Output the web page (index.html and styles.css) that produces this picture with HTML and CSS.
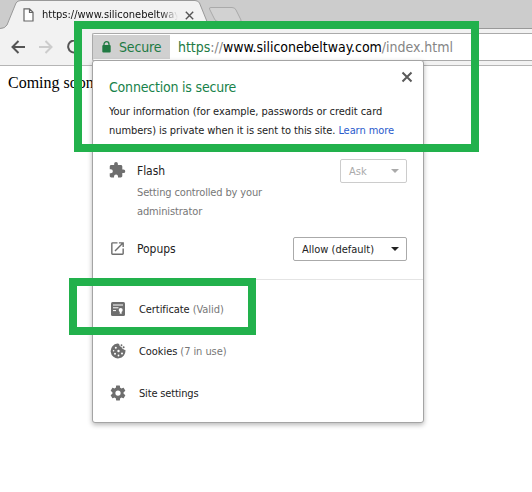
FILE: index.html
```html
<!DOCTYPE html>
<html lang="en">
<head>
<meta charset="utf-8">
<title>Site information</title>
<link rel="stylesheet" href="styles.css">
</head>
<body>
<div class="browser">
  <header class="tabstrip">
    <svg class="tab-shapes" width="532" height="29" viewBox="0 0 532 29">
      <path d="M0 28.5H5M207 28.5H532" stroke="#999" fill="none"/>
      <path d="M0 29V28.5Q5 28.5 7 25L16 3Q17.500 .5 21 .5H195Q198 .5 199.500 3L208 24Q210 28.500 215 28.500V29Z" fill="#f2f2f2"/>
      <path d="M0 28.500Q5 28.500 7 25L16 3Q17.500 .5 21 .5H195Q198 .5 199.500 3L208 24Q210 28.500 215 28.500" fill="none" stroke="#999"/>
      <path d="M211 7.500H232Q235 7.500 236 10L241 20Q242 21.500 239 21.500H218Q215.500 21.500 214.500 19L209.500 9Q209 7.500 211 7.500Z" fill="#d2d2d2" stroke="#aaa"/>
    </svg>
    <div class="tab">
      <svg class="file-icon" width="11" height="14" viewBox="0 0 11 14"><path d="M1 .8H6.500L10 4.300V13H1ZM6.500 1V4.500H10" fill="#fff" stroke="#666" stroke-width="1.200"/></svg>
      <span class="tab-title">https://www.siliconebeltway</span>
      <svg class="tab-close" width="9" height="9" viewBox="0 0 9 9"><path d="M.8.8L8.200 8.200M8.200.8L.8 8.200" stroke="#555" stroke-width="1.400"/></svg>
    </div>
  </header>
  <div class="toolbar">
    <svg class="nav" width="14" height="14" viewBox="0 0 14 14"><path d="M14 7H1.500M7.500 1L1.500 7L7.500 13" fill="none" stroke="#555" stroke-width="2"/></svg>
    <svg class="nav" width="14" height="14" viewBox="0 0 14 14"><path d="M0 7H12.500M6.500 1L12.500 7L6.500 13" fill="none" stroke="#ccc" stroke-width="2"/></svg>
    <svg class="nav" width="14" height="14" viewBox="0 0 14 14"><path d="M12 3A6 6 0 1 0 13 8M13 0V5H8" fill="none" stroke="#555" stroke-width="2"/></svg>
    <div class="omnibox">
      <div class="chip">
        <svg width="9" height="12" viewBox="0 0 9 12"><path d="M2 5V3.200A2.500 2.500 0 0 1 7 3.200V5" fill="none" stroke="#217a43" stroke-width="1.300"/><rect x=".3" y="4" width="8.400" height="7.500" rx="1" fill="#217a43"/></svg>
        <span class="chip-label">Secure</span>
      </div>
      <div class="url"><span class="scheme">https</span><span class="dim">://</span>www.siliconebeltway.com<span class="dim">/index.html</span></div>
    </div>
  </div>
  <main class="page">Coming soon</main>
</div>

<section class="popup">
  <div class="summary">
    <h1>Connection is secure</h1>
    <svg class="popup-close" width="12" height="12" viewBox="0 0 12 12"><path d="M1.500 1.500L10.500 10.500M10.500 1.500L1.500 10.500" stroke="#5a5a5a" stroke-width="2"/></svg>
    <p><span class="l1">Your information (for example, passwords or credit card</span><br><span class="l2">numbers) is private when it is sent to this site. <a>Learn more</a></span></p>
  </div>
  <div class="permissions">
    <div class="perm flash">
      <svg class="icon" width="17" height="17" viewBox="1 1 23 23"><path fill="#6e6e6e" d="M20.500 11H19V7c0-1.100-.9-2-2-2h-4V3.500a2.500 2.500 0 0 0-5 0V5H4c-1.100 0-1.990.9-1.990 2v3.800H3.500a2.700 2.700 0 0 1 0 5.400H2V20c0 1.100.9 2 2 2h3.800v-1.500a2.700 2.700 0 0 1 5.400 0V22H17c1.100 0 2-.9 2-2v-4h1.500a2.500 2.500 0 0 0 0-5z"/></svg>
      <div class="perm-text"><span class="name">Flash</span><div class="note">Setting controlled by your<br>administrator</div></div>
      <div class="select disabled"><span>Ask</span><i class="arrow"></i></div>
    </div>
    <div class="perm">
      <svg class="icon" width="17" height="17" viewBox="0 0 24 24"><path fill="#6e6e6e" d="M19 19H5V5h7V3H5a2 2 0 0 0-2 2v14a2 2 0 0 0 2 2h14c1.100 0 2-.9 2-2v-7h-2v7zM14 3v2h3.590l-9.830 9.830 1.410 1.410L19 6.410V10h2V3h-7z"/></svg>
      <div class="perm-text"><span class="name">Popups</span></div>
      <div class="select"><span>Allow (default)</span><i class="arrow"></i></div>
    </div>
  </div>
  <div class="links">
    <div class="link">
      <svg class="icon" width="16" height="16" viewBox="0 0 16 16"><rect x="1" y="1" width="14" height="14" rx="1.500" fill="#6e6e6e"/><path d="M3 4H13M3 6.800H8.500M3 9.600H6" stroke="#fff" stroke-width="1"/><circle cx="10.700" cy="9" r="2" fill="#fff"/><path d="M9.800 10H11.600V13L10.700 12.400L9.800 13Z" fill="#fff"/></svg>
      <span class="cert">Certificate <em>(Valid)</em></span>
    </div>
    <div class="link">
      <svg class="icon" width="16" height="16" viewBox="0 0 16 16"><path d="M7.500.6Q9.500.4 9.700 3Q10.500 3.800 11.500 3.600Q11.500 6 13.200 6Q14 7 15.400 7A7.400 7.400 0 1 1 7.500.6Z" fill="#6e6e6e"/><circle cx="11.500" cy="2.200" r=".9" fill="#6e6e6e"/><circle cx="13.600" cy="4.300" r="1" fill="#6e6e6e"/><g fill="#fff"><circle cx="5.800" cy="4.700" r="1"/><circle cx="3.600" cy="7.700" r=".8"/><circle cx="8.500" cy="8" r="1.200"/><circle cx="5" cy="10.700" r="1"/><circle cx="8.500" cy="12.500" r=".9"/><circle cx="12" cy="10.500" r="1"/></g></svg>
      <span class="cook">Cookies <em>(7 in use)</em></span>
    </div>
    <div class="link">
      <svg class="icon" width="18" height="18" viewBox="0 0 24 24"><path fill="#6e6e6e" d="M19.430 12.980c.04-.32.07-.64.07-.98s-.03-.66-.07-.98l2.110-1.650c.19-.15.24-.42.12-.64l-2-3.460c-.12-.22-.39-.3-.61-.22l-2.490 1c-.52-.4-1.080-.73-1.690-.98l-.38-2.650A.49.49 0 0 0 14 2h-4c-.25 0-.46.180-.49.420l-.38 2.650c-.61.250-1.170.590-1.690.980l-2.490-1c-.23-.09-.49 0-.61.220l-2 3.460c-.13.220-.07.490.12.640l2.110 1.650c-.04.320-.07.650-.07.980s.03.660.07.980l-2.110 1.650c-.19.150-.24.420-.12.640l2 3.460c.12.220.39.300.61.220l2.490-1c.52.400 1.080.730 1.690.980l.38 2.650c.03.240.24.420.49.420h4c.25 0 .46-.18.49-.42l.38-2.650c.61-.25 1.170-.59 1.690-.98l2.490 1c.23.090.49 0 .61-.22l2-3.460c.12-.22.070-.49-.12-.64l-2.110-1.650zM12 15.500a3.500 3.500 0 1 1 0-7 3.500 3.500 0 0 1 0 7z"/></svg>
      <span class="sett">Site settings</span>
    </div>
  </div>
</section>
<div class="mark mark-secure"></div>
<div class="mark mark-cert"></div>
</body>
</html>
```
FILE: styles.css
```css
* { box-sizing: border-box; }
body { margin: 0; width: 532px; height: 492px; overflow: hidden; background: #fff; font-family: "DejaVu Sans Condensed", "DejaVu Sans", sans-serif; font-stretch: condensed; font-size: 11px; color: #222; }
svg { display: block; flex: none; }
span { white-space: nowrap; }

.tabstrip { position: relative; height: 29px; background: #ccc; }
.tab-shapes { position: absolute; left: 0; top: 0; }
.tab { position: relative; display: flex; align-items: center; height: 29px; padding-left: 23px; }
.file-icon { margin-top: 1px; }
.tab-title { flex: none; width: 142px; margin-left: 8px; line-height: 20px; color: #111; -webkit-mask-image: linear-gradient(90deg, #000 118px, transparent 136px); mask-image: linear-gradient(90deg, #000 118px, transparent 136px); }
.tab-close { margin-left: 1px; margin-top: 2px; }

.toolbar { display: flex; align-items: center; height: 37px; background: #f2f2f2; border-bottom: 1px solid #b5b5b5; padding-left: 11px; }
.nav { margin-right: 14px; }
.omnibox { display: flex; align-items: center; flex: 1; height: 28px; margin-left: -3px; background: #fff; border: 1px solid #aaa; border-right: 0; border-radius: 2px 0 0 2px; }
.chip { display: flex; align-items: center; width: 77px; height: 24px; padding-left: 9px; background: #d0d0d0; color: #217a43; font-size: 14px; letter-spacing: -.15px; }
.chip-label { margin-left: 8px; }
.url { margin-left: 8px; font-size: 14px; letter-spacing: -.03px; color: #000; white-space: nowrap; }
.scheme { color: #217a43; }
.dim { color: #858585; }
.page { padding: 8px; font: 16px/18px "Liberation Serif", serif; color: #000; }

.popup { position: absolute; left: 92px; top: 60px; width: 332px; height: 363px; background: #fff; border: 1px solid #a4a4a4; border-radius: 3px; box-shadow: 0 2px 5px rgba(0,0,0,.28); }
.summary { display: grid; grid-template-columns: 1fr 12px; grid-template-rows: 25px 38px; height: 91px; padding: 16px 10px 0 16px; }
h1 { margin: 0; font-size: 14px; line-height: 20px; font-weight: normal; color: #17824a; letter-spacing: -.2px; }
.popup-close { margin-top: -6px; }
p { grid-column: 1 / -1; margin: 0; line-height: 19px; }
.l1 { letter-spacing: -.04px; }
.l2 { letter-spacing: -.085px; }
a { color: #2a5bcc; }
.permissions { height: 128px; border-bottom: 1px solid #e4e4e4; padding: 7px 16px 0 16px; }
.perm { display: flex; align-items: flex-start; }
.flash { height: 78px; }
.perm .icon { margin-top: 3px; }
.perm-text { flex: 1; margin-left: 11px; }
.name { display: block; font-size: 12px; line-height: 24px; letter-spacing: -.05px; }
.note { line-height: 19px; color: #777; letter-spacing: -.14px; }
.select { display: flex; align-items: center; justify-content: space-between; width: 114px; height: 24px; padding: 0 7px 0 8px; border: 1px solid #aaa; border-radius: 2px; }
.select.disabled { width: 67px; border-color: #ccc; color: #aaa; }
.arrow { border: 4px solid transparent; border-top-color: currentColor; border-bottom: 0; }
.links { padding: 8px 16px 0; }
.link { display: flex; align-items: center; height: 42px; }
.link .icon { width: 18px; }
.link span { margin-left: 12px; letter-spacing: -.07px; }
.link .sett { letter-spacing: -.17px; }
em { font-style: normal; color: #777; }

.mark { position: absolute; border: 8px solid #22b14c; }
.mark-secure { left: 74px; top: 21px; width: 405px; height: 131px; }
.mark-cert { left: 69px; top: 278px; width: 187px; height: 57px; }
```
